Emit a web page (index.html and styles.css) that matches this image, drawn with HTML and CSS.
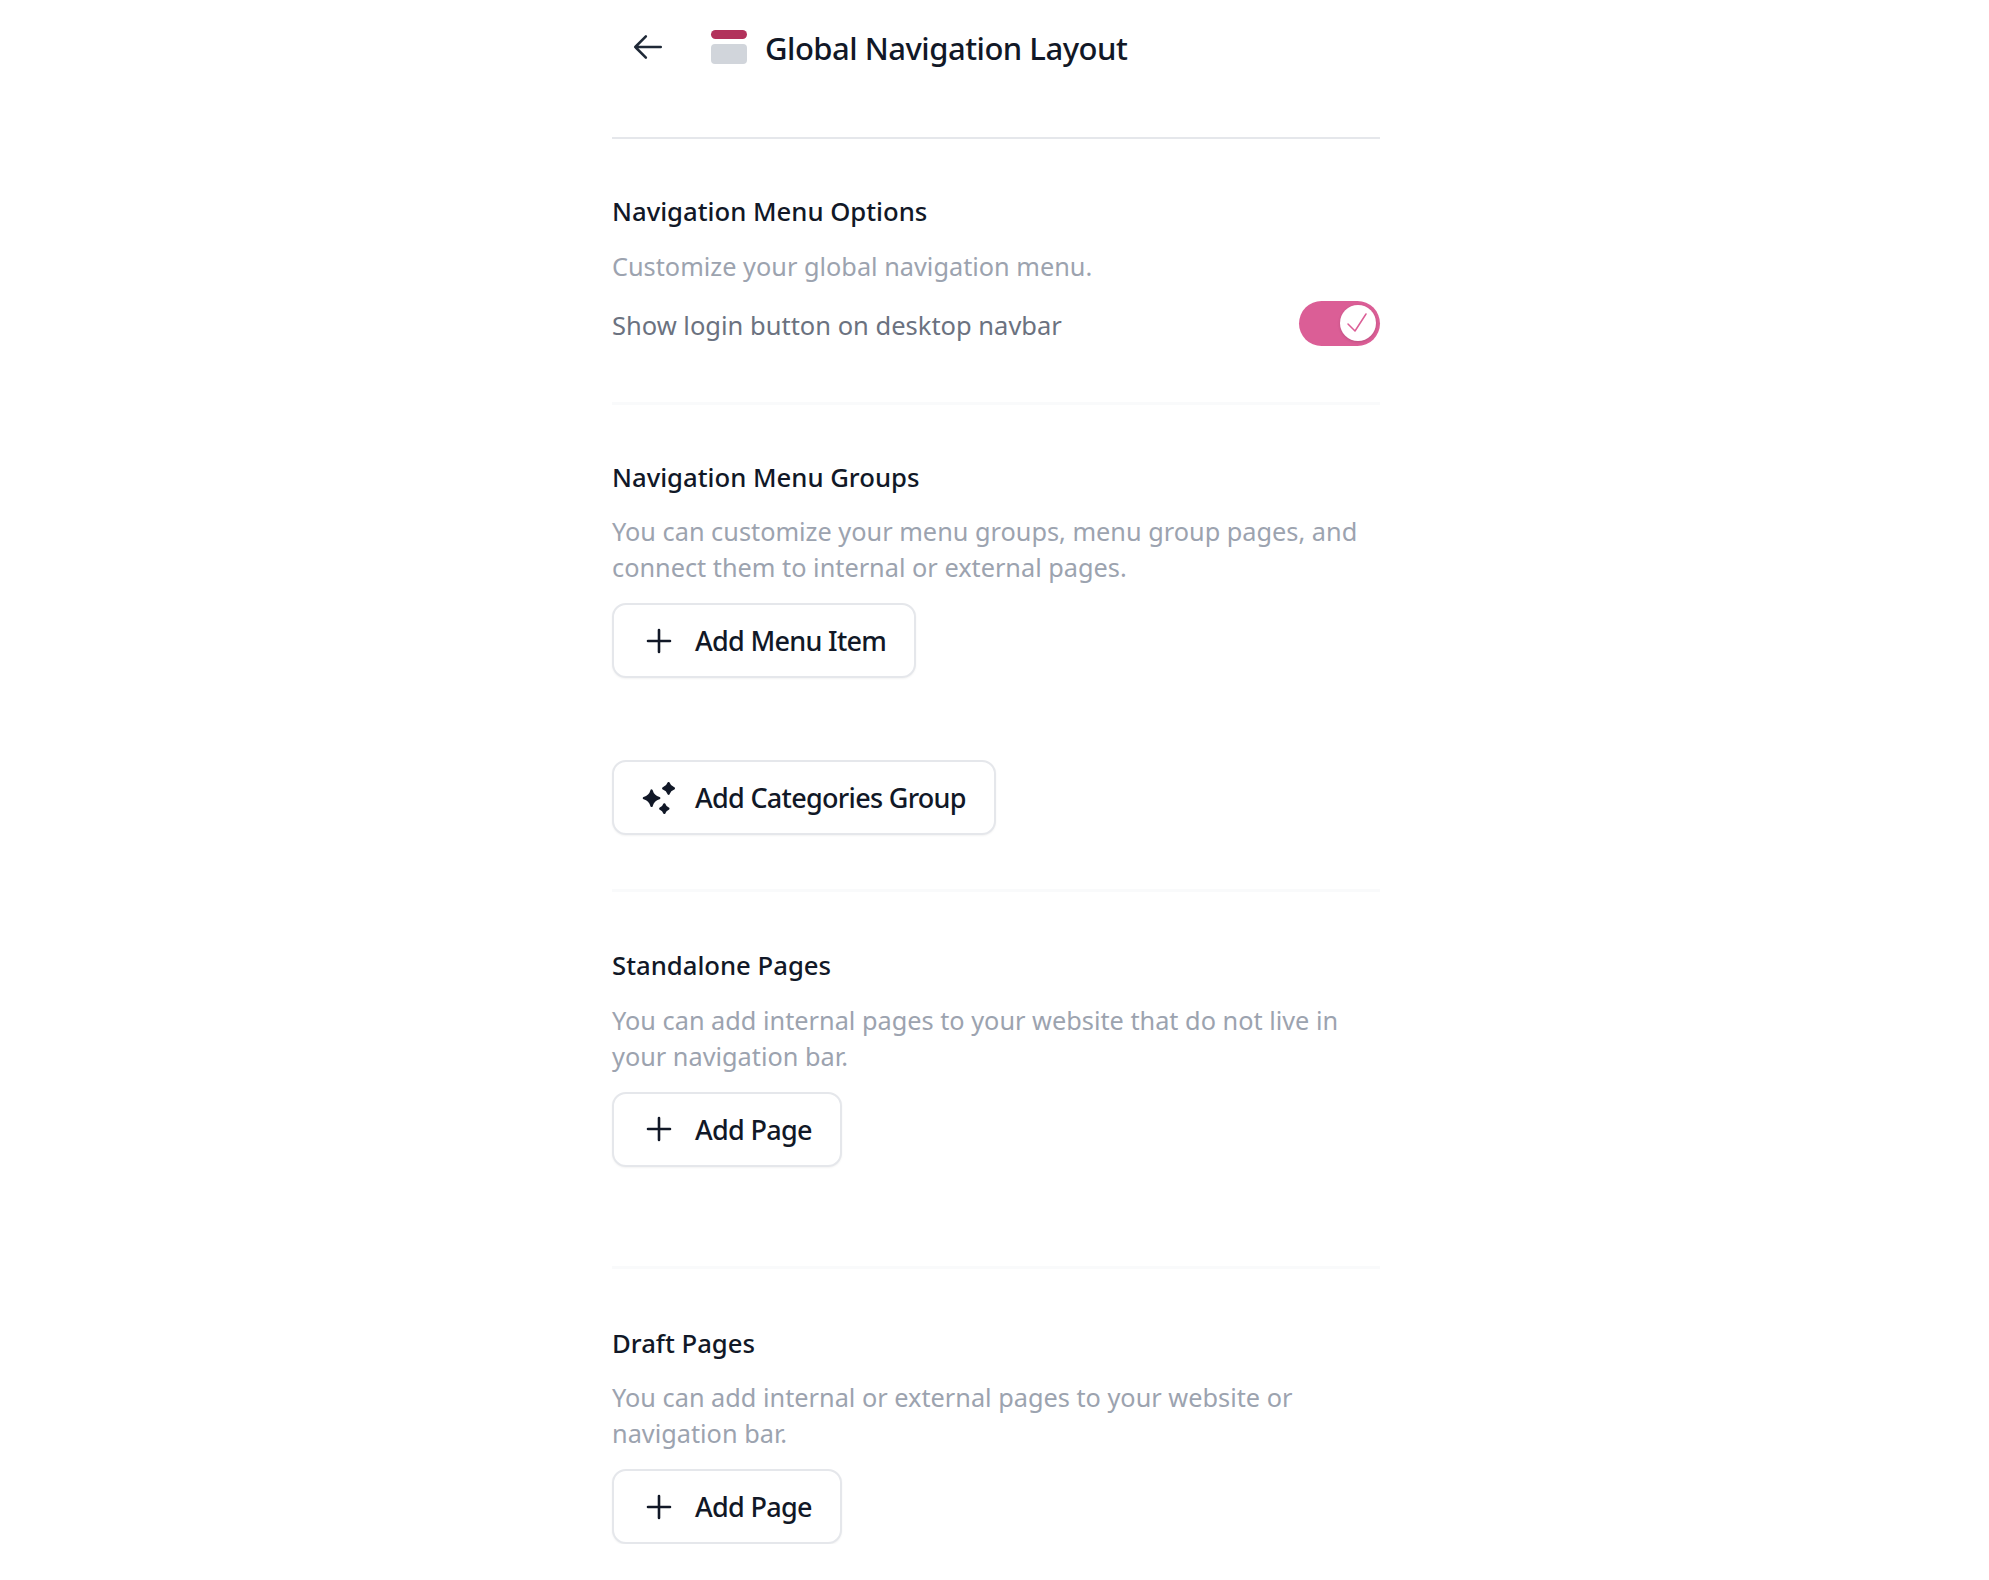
FILE: index.html
```html
<!DOCTYPE html>
<html lang="en">
<head>
    <meta charset="UTF-8">
    <meta name="viewport" content="width=device-width, initial-scale=1.0">
    <title>Global Navigation Layout</title>
    <link rel="stylesheet" href="styles.css">
</head>
<body>
    <main class="page">
        <header class="page-header">
            <button type="button" class="back-button" aria-label="Back">
                <svg width="34" height="34" viewBox="0 0 24 24" fill="none" stroke="#1f2937" stroke-width="1.8" stroke-linecap="round" stroke-linejoin="round"><path d="M10.500 19.500 3 12l7.500-7.500M3 12h18"/></svg>
            </button>
            <span class="layout-icon"><span class="layout-icon-top"></span><span class="layout-icon-body"></span></span>
            <h1>Global Navigation Layout</h1>
        </header>

        <section class="section section-options">
            <h2>Navigation Menu Options</h2>
            <p class="hint">Customize your global navigation menu.</p>
            <div class="toggle-row">
                <span class="toggle-label">Show login button on desktop navbar</span>
                <span class="toggle">
                    <span class="toggle-knob">
                        <svg width="24" height="24" viewBox="0 0 24 24" fill="none" stroke="#db5e96" stroke-width="1.5" stroke-linecap="round" stroke-linejoin="round"><path d="M2 13l7 7L20 3"/></svg>
                    </span>
                </span>
            </div>
        </section>

        <section class="section section-groups">
            <h2>Navigation Menu Groups</h2>
            <p class="hint">You can customize your menu groups, menu group pages, and connect them to internal or external pages.</p>
            <button type="button" class="add-button">
                <svg class="add-icon" width="32" height="32" viewBox="0 0 32 32" fill="none" stroke="#111827" stroke-width="2.600" stroke-linecap="round"><path d="M16 5v22M5 16h22"/></svg>
                Add Menu Item
            </button>
            <button type="button" class="add-button add-button-categories">
                <svg class="add-icon" width="34" height="34" viewBox="0 0 32 32" fill="#111827" stroke="#111827" stroke-width="2.200" stroke-linejoin="round"><path d="M9 9c1 3.800 2.600 5.800 7.200 7.200C11.600 17.600 10 19.600 9 23.400 8 19.600 6.400 17.600 1.800 16.200 6.400 14.800 8 12.800 9 9z"/><path d="M25 2c.7 2.300 1.900 3.800 5 5-3.100 1.200-4.300 2.700-5 5-.7-2.300-1.900-3.800-5-5 3.100-1.200 4.300-2.700 5-5z"/><path d="M21 22c.5 1.900 1.400 3 3.800 4-2.400 1-3.300 2.100-3.800 4-.5-1.900-1.400-3-3.800-4 2.400-1 3.300-2.100 3.800-4z"/></svg>
                Add Categories Group
            </button>
        </section>

        <section class="section section-standalone">
            <h2>Standalone Pages</h2>
            <p class="hint">You can add internal pages to your website that do not live in your navigation bar.</p>
            <button type="button" class="add-button">
                <svg class="add-icon" width="32" height="32" viewBox="0 0 32 32" fill="none" stroke="#111827" stroke-width="2.600" stroke-linecap="round"><path d="M16 5v22M5 16h22"/></svg>
                Add Page
            </button>
        </section>

        <section class="section section-draft">
            <h2>Draft Pages</h2>
            <p class="hint">You can add internal or external pages to your website or navigation bar.</p>
            <button type="button" class="add-button">
                <svg class="add-icon" width="32" height="32" viewBox="0 0 32 32" fill="none" stroke="#111827" stroke-width="2.600" stroke-linecap="round"><path d="M16 5v22M5 16h22"/></svg>
                Add Page
            </button>
        </section>
    </main>
</body>
</html>
```

FILE: styles.css
```css
body {
    font-family: "Noto Sans", "Open Sans", sans-serif;
    margin: 0;
    padding: 0 0 0 3px;
    background-color: #ffffff;
    color: #111827;
}

.page {
    width: 768px;
    margin: 0 auto;
}

.page-header {
    display: flex;
    align-items: center;
    height: 139px;
    padding-bottom: 41px;
    box-sizing: border-box;
    border-bottom: 2px solid #e5e7eb;
}

.back-button {
    display: flex;
    padding: 0;
    margin: 0 0 2px 19px;
    background: none;
    border: none;
    cursor: pointer;
}

.layout-icon {
    display: flex;
    flex-direction: column;
    gap: 5px;
    width: 36px;
    margin: 0 18px 2px 46px;
}

.layout-icon-top {
    height: 9px;
    background-color: #b2325b;
    border-radius: 5px;
}

.layout-icon-body {
    height: 20px;
    background-color: #d1d5db;
    border-radius: 4px;
}

h1 {
    margin: 0;
    font-size: 31px;
    font-weight: 500;
    letter-spacing: -0.5px;
    line-height: 40px;
}

.section {
    border-bottom: 3px solid #f9fafb;
}

.section:last-child {
    border-bottom: none;
}

.section-options {
    padding: 55px 0 56px;
}

.section-groups {
    padding: 55px 0 54px;
}

.section-standalone {
    padding: 56px 0 99px;
}

.section-draft {
    padding: 57px 0 0;
}

h2 {
    margin: 0;
    font-size: 25.7px;
    font-weight: 500;
    line-height: 36px;
}

.hint {
    margin: 17.5px 0 0;
    font-size: 25.3px;
    line-height: 36px;
    color: #9ca3af;
}

.toggle-row {
    display: flex;
    align-items: center;
    justify-content: space-between;
    margin-top: 17px;
}

.toggle-label {
    margin-top: 3px;
    font-size: 25.5px;
    line-height: 36px;
    color: #6b7280;
}

.toggle {
    display: flex;
    align-items: center;
    justify-content: flex-end;
    width: 81px;
    height: 45px;
    padding-right: 4px;
    box-sizing: border-box;
    background-color: #db5e96;
    border-radius: 23px;
}

.toggle-knob {
    display: flex;
    align-items: center;
    justify-content: center;
    width: 36px;
    height: 36px;
    background-color: #ffffff;
    border-radius: 50%;
    box-shadow: 0 1px 3px rgba(0, 0, 0, 0.15);
}

.add-button {
    display: flex;
    align-items: center;
    height: 75px;
    margin-top: 18px;
    padding: 0 28px 0 0;
    box-sizing: border-box;
    font-family: inherit;
    font-size: 27px;
    font-weight: 500;
    letter-spacing: -0.7px;
    color: #111827;
    background-color: #ffffff;
    border: 2px solid #e5e7eb;
    border-radius: 14px;
    box-shadow: 0 1px 2px rgba(0, 0, 0, 0.05);
    cursor: pointer;
}

.add-icon {
    flex: none;
    margin: 0 20px 0 29px;
}

.add-button-categories {
    margin-top: 82px;
}

.add-button-categories .add-icon {
    margin: 0 19px 0 28px;
}
```
